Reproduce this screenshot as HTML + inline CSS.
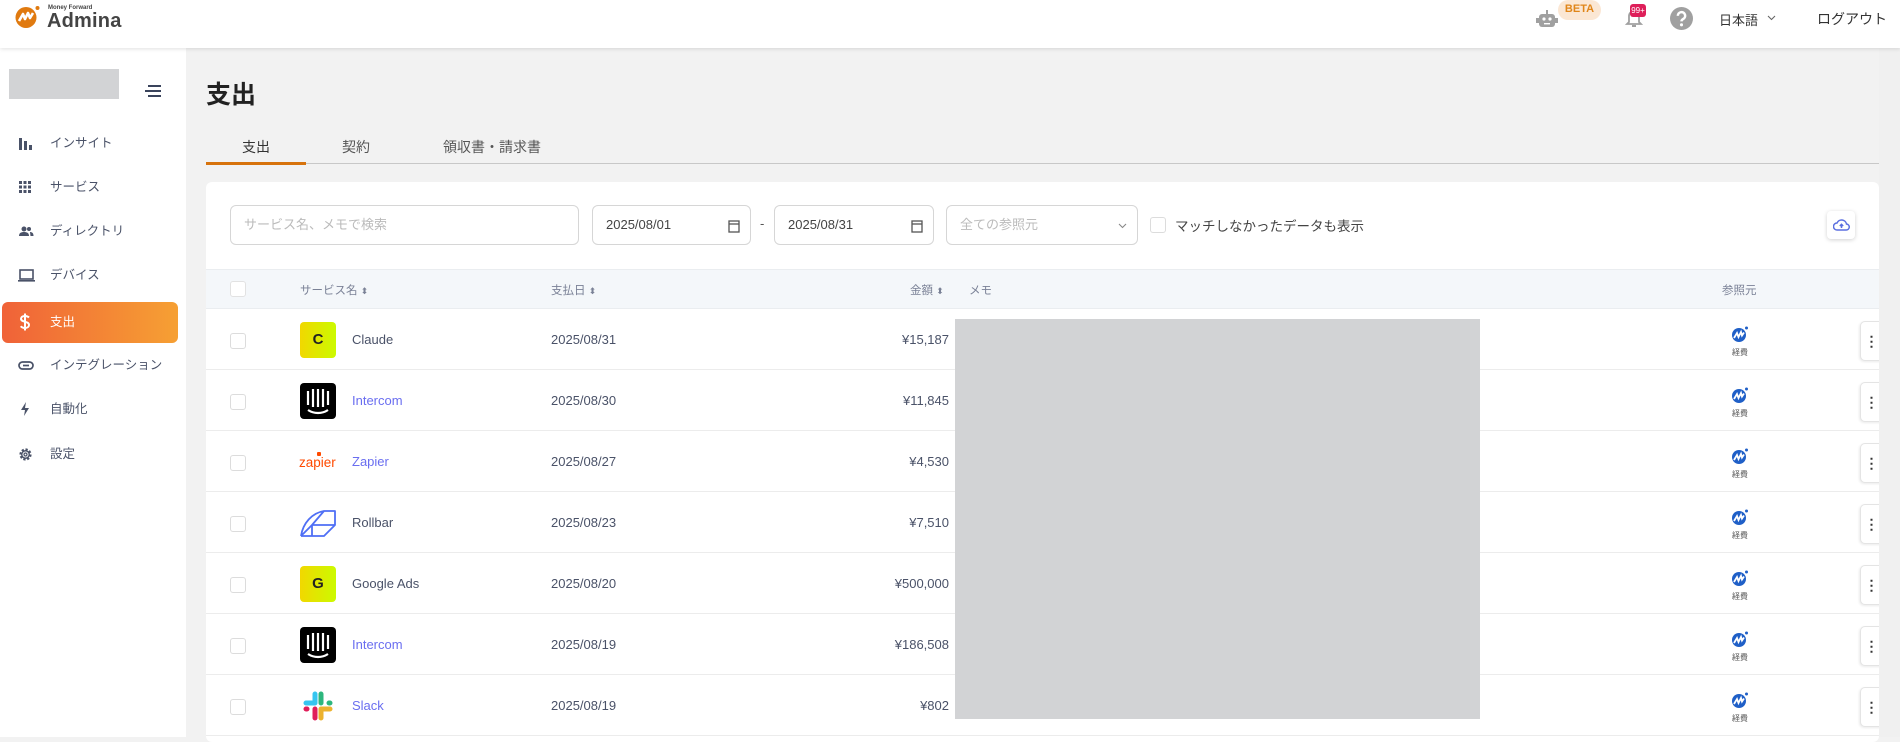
<!DOCTYPE html>
<html><head><meta charset="utf-8"><style>
*{box-sizing:border-box;margin:0;padding:0}
body{width:1900px;height:737px;overflow:hidden;background:#f2f2f2;font-family:"Liberation Sans","Noto Sans CJK JP",sans-serif;color:#444;position:relative}
.abs{position:absolute}
#hdr{left:0;top:0;width:1900px;height:48px;background:#fff;box-shadow:0 1px 4px rgba(0,0,0,.12);z-index:3}
#side{left:0;top:48px;width:186px;height:689px;background:#fff}
.nav{position:absolute;left:2px;width:176px;height:41px;border-radius:6px;font-size:12.5px;color:#4a5268;line-height:41px;padding-left:48px}
.nav svg{position:absolute;left:16px;top:13px}
.nav.act{background:linear-gradient(90deg,#f06238,#f6a033);color:#fff}
#card{left:206px;top:182px;width:1673px;height:560px;background:#fff;border-radius:6px}
.inp{position:absolute;top:205px;height:40px;border:1px solid #d6d6d6;border-radius:6px;font-size:13px;line-height:38px;padding-left:13px;background:#fff}
.row{position:absolute;left:206px;width:1673px;height:61px;border-bottom:1px solid #ececec}
.cb{position:absolute;width:16px;height:16px;border:1px solid #dcdcdc;border-radius:3px;background:#fff}
.t{position:absolute;font-size:13px;white-space:nowrap}
.th{position:absolute;font-size:11.5px;color:#7a8196;white-space:nowrap}
.kb{position:absolute;left:1860px;width:22px;height:40px;background:#fff;border:1px solid #e4e4e4;border-right:none;border-radius:5px 0 0 5px;box-shadow:-1px 1px 2px rgba(0,0,0,.08);font-weight:bold;font-size:14px;text-align:center;line-height:38px;color:#333}
.mf{position:absolute;left:1728px;width:24px;text-align:center}
.mf div{font-size:8px;color:#555;line-height:10px;margin-top:1px}
</style></head><body>
<div id="hdr" class="abs">
  <svg class="abs" style="left:15px;top:5px" width="26" height="24" viewBox="0 0 26 24"><circle cx="11" cy="12.5" r="10.5" fill="#e07a10"/><circle cx="22.5" cy="3" r="2" fill="#e07a10"/><path d="M4 16 L8 9 L10 14 L13 8 L15 13 L18 8" stroke="#fff" stroke-width="2.6" fill="none" stroke-linejoin="round"/></svg>
  <div class="abs" style="left:48px;top:5px;font-size:6px;font-weight:bold;color:#444">Money Forward</div>
  <div class="abs" style="left:47px;top:10px;font-size:20px;font-weight:bold;color:#444;letter-spacing:0.2px">Admina</div>
  <svg class="abs" style="left:1536px;top:9px" width="22" height="20" viewBox="0 0 22 20"><rect x="3" y="5" width="16" height="13" rx="3" fill="#a0a0a0"/><rect x="0" y="9" width="3" height="5" fill="#a0a0a0"/><rect x="19" y="9" width="3" height="5" fill="#a0a0a0"/><rect x="10" y="1" width="2" height="4" fill="#a0a0a0"/><circle cx="8" cy="10" r="1.6" fill="#fff"/><circle cx="14" cy="10" r="1.6" fill="#fff"/><rect x="8" y="14" width="6" height="1.4" fill="#fff"/></svg>
  <div class="abs" style="left:1558px;top:0;width:43px;height:20px;border-radius:10px;background:#fbe7d4;color:#e0861a;font-size:11px;font-weight:bold;text-align:center;line-height:19px">BETA</div>
  <svg class="abs" style="left:1625px;top:6px" width="18" height="22" viewBox="0 0 18 22"><path d="M4 16V10a5 5 0 0 1 10 0v6l2 2H2z" fill="none" stroke="#a0a0a0" stroke-width="1.8"/><rect x="7" y="19" width="4" height="2" fill="#a0a0a0"/></svg>
  <div class="abs" style="left:1630px;top:4px;width:16px;height:13px;border-radius:3px;background:#de1f5a;color:#fff;font-size:8px;text-align:center;line-height:13px">99+</div>
  <svg class="abs" style="left:1670px;top:7px" width="23" height="23" viewBox="0 0 24 24"><circle cx="12" cy="12" r="12" fill="#a0a0a0"/><path d="M8.2 9.2a3.8 3.8 0 1 1 5.6 3.3c-1.2.7-1.8 1.2-1.8 2.5" stroke="#fff" stroke-width="2.6" fill="none"/><circle cx="12" cy="18.6" r="1.6" fill="#fff"/></svg>
  <div class="abs" style="left:1719px;top:10px;font-size:13px;color:#333">日本語</div>
  <svg class="abs" style="left:1767px;top:15px" width="9" height="6" viewBox="0 0 9 6"><path d="M1 1l3.5 3.5L8 1" stroke="#666" fill="none" stroke-width="1.1"/></svg>
  <div class="abs" style="left:1817px;top:9px;font-size:14px;color:#333">ログアウト</div>
</div>

<div id="side" class="abs"></div>
<div class="abs" style="left:9px;top:69px;width:110px;height:30px;background:#d2d3d5"></div>
<svg class="abs" style="left:144px;top:84px" width="18" height="14" viewBox="0 0 18 14"><path d="M4 2h13M1 7h16M4 12h13" stroke="#1e2a45" stroke-width="1.8"/></svg>
<div class="nav" style="top:123px"><svg width="16" height="14" viewBox="0 0 16 14"><rect x="1" y="2" width="3" height="12" fill="#4a5268"/><rect x="6" y="5" width="3" height="9" fill="#4a5268"/><rect x="11" y="9" width="3" height="5" fill="#4a5268"/></svg>インサイト</div>
<div class="nav" style="top:167px"><svg width="14" height="14" viewBox="0 0 14 14" fill="#4a5268"><rect x="1" y="1" width="3" height="3"/><rect x="5.5" y="1" width="3" height="3"/><rect x="10" y="1" width="3" height="3"/><rect x="1" y="5.5" width="3" height="3"/><rect x="5.5" y="5.5" width="3" height="3"/><rect x="10" y="5.5" width="3" height="3"/><rect x="1" y="10" width="3" height="3"/><rect x="5.5" y="10" width="3" height="3"/><rect x="10" y="10" width="3" height="3"/></svg>サービス</div>
<div class="nav" style="top:211px"><svg width="16" height="14" viewBox="0 0 16 14" fill="#4a5268"><circle cx="6" cy="5" r="2.5"/><circle cx="11" cy="5" r="2"/><path d="M1 12c0-3 2-4 5-4s5 1 5 4z"/><path d="M12 8c2 0 3.5 1 3.5 4h-3z"/></svg>ディレクトリ</div>
<div class="nav" style="top:255px"><svg width="17" height="14" viewBox="0 0 17 14"><rect x="2" y="2" width="13" height="9" fill="none" stroke="#4a5268" stroke-width="1.6"/><rect x="0" y="12" width="17" height="1.6" fill="#4a5268"/></svg>デバイス</div>
<div class="nav act" style="top:302px"><svg width="14" height="18" viewBox="0 0 14 18" style="top:11px"><path d="M11 4.5C10 3.5 9 3 7 3 4.5 3 3 4.2 3 5.8c0 3.8 8 2 8 6.2 0 1.7-1.6 3-4 3-2 0-3.4-.7-4.2-1.8M7 0.5v17" stroke="#fff" stroke-width="2" fill="none"/></svg>支出</div>
<div class="nav" style="top:345px"><svg width="16" height="14" viewBox="0 0 16 14"><rect x="1" y="4" width="14" height="7" rx="3.5" fill="none" stroke="#4a5268" stroke-width="1.7"/><path d="M5 7.5h6" stroke="#4a5268" stroke-width="1.7"/></svg>インテグレーション</div>
<div class="nav" style="top:389px"><svg width="14" height="14" viewBox="0 0 14 14"><path d="M8 0L3 8h4l-1 6 5-8H7z" fill="#4a5268"/></svg>自動化</div>
<div class="nav" style="top:434px"><svg width="15" height="15" viewBox="0 0 16 16"><circle cx="8" cy="8" r="5" fill="none" stroke="#4a5268" stroke-width="3" stroke-dasharray="2.2 1.7"/><circle cx="8" cy="8" r="4" fill="none" stroke="#4a5268" stroke-width="1.5"/><circle cx="8" cy="8" r="1.6" fill="none" stroke="#4a5268" stroke-width="1.3"/></svg>設定</div>

<div class="abs" style="left:206px;top:75px;font-size:25px;font-weight:bold;color:#222">支出</div>
<div class="abs" style="left:206px;top:163px;width:1673px;height:1px;background:#c8c8c8"></div>
<div class="abs" style="left:206px;top:162px;width:100px;height:3px;background:#d7730d"></div>
<div class="t" style="left:242px;top:137px;font-size:14px;color:#333">支出</div>
<div class="t" style="left:342px;top:137px;font-size:14px;color:#555">契約</div>
<div class="t" style="left:443px;top:137px;font-size:14px;color:#555">領収書・請求書</div>

<div id="card" class="abs"></div>
<div class="inp" style="left:230px;width:349px;color:#bbb">サービス名、メモで検索</div>
<div class="inp" style="left:592px;width:159px;color:#444">2025/08/01<svg class="abs" style="right:10px;top:13px" width="12" height="14" viewBox="0 0 12 14"><rect x="1" y="2" width="10" height="11" fill="none" stroke="#555" stroke-width="1.3"/><path d="M1 5h10" stroke="#555" stroke-width="1.3"/></svg></div>
<div class="t" style="left:760px;top:216px;color:#555">-</div>
<div class="inp" style="left:774px;width:160px;color:#444">2025/08/31<svg class="abs" style="right:10px;top:13px" width="12" height="14" viewBox="0 0 12 14"><rect x="1" y="2" width="10" height="11" fill="none" stroke="#555" stroke-width="1.3"/><path d="M1 5h10" stroke="#555" stroke-width="1.3"/></svg></div>
<div class="inp" style="left:946px;width:192px;color:#bbb">全ての参照元<svg class="abs" style="right:10px;top:17px" width="9" height="6" viewBox="0 0 9 6"><path d="M1 1l3.5 3.5L8 1" stroke="#888" fill="none" stroke-width="1.1"/></svg></div>
<div class="cb" style="left:1150px;top:217px"></div>
<div class="t" style="left:1175px;top:215px;color:#444;font-size:13.5px">マッチしなかったデータも表示</div>
<div class="abs" style="left:1827px;top:211px;width:28px;height:28px;background:#fff;border-radius:4px;box-shadow:0 1px 4px rgba(0,0,0,.18)"><svg class="abs" style="left:6px;top:8px" width="17" height="12" viewBox="0 0 17 12"><path d="M4 11a3.5 3.5 0 0 1 0-7 5 5 0 0 1 9.5 1A3 3 0 0 1 13 11z" fill="none" stroke="#5b6fe0" stroke-width="1.5"/><path d="M8.5 9V5.5M6.8 7l1.7-1.7L10.2 7" stroke="#5b6fe0" stroke-width="1.5" fill="none"/></svg></div>

<div class="abs" style="left:206px;top:269px;width:1673px;height:40px;background:#f4f7fa;border-top:1px solid #eaedf0;border-bottom:1px solid #eaedf0"></div>
<div class="cb" style="left:230px;top:281px;border-color:#e2e2e2"></div>
<div class="th" style="left:300px;top:282px">サービス名 <span style="font-size:9px">⬍</span></div>
<div class="th" style="left:551px;top:282px">支払日 <span style="font-size:9px">⬍</span></div>
<div class="th" style="left:910px;top:282px">金額 <span style="font-size:9px">⬍</span></div>
<div class="th" style="left:969px;top:282px">メモ</div>
<div class="th" style="left:1722px;top:282px">参照元</div>

<div class="row" style="top:309px"></div>
<div class="row" style="top:370px"></div>
<div class="row" style="top:431px"></div>
<div class="row" style="top:492px"></div>
<div class="row" style="top:553px"></div>
<div class="row" style="top:614px"></div>
<div class="row" style="top:675px"></div>

<div class="abs" style="left:955px;top:319px;width:525px;height:400px;background:#d2d3d5"></div>

<div class="cb" style="left:230px;top:333px"></div><div class="cb" style="left:230px;top:394px"></div><div class="cb" style="left:230px;top:455px"></div><div class="cb" style="left:230px;top:516px"></div><div class="cb" style="left:230px;top:577px"></div><div class="cb" style="left:230px;top:638px"></div><div class="cb" style="left:230px;top:699px"></div>

<div class="abs" style="left:300px;top:322px;width:36px;height:36px;border-radius:4px;background:linear-gradient(90deg,#f1d800,#ccfa00);font-weight:bold;font-size:15px;text-align:center;line-height:36px;color:#222">C</div>
<div class="t" style="left:352px;top:332px;color:#4a5268">Claude</div>
<svg class="abs" style="left:300px;top:383px" width="36" height="36" viewBox="0 0 36 36"><rect width="36" height="36" rx="4" fill="#000"/><path d="M8 8v14M13 6v18M18 6v18M23 6v18M28 8v14" stroke="#fff" stroke-width="2.2"/><path d="M8 27c6 4 14 4 20 0" stroke="#fff" stroke-width="2.2" fill="none"/></svg>
<div class="t" style="left:352px;top:393px;color:#6a6ef0">Intercom</div>
<div class="t" style="left:299px;top:455px;color:#ff4a00;font-size:13.5px">zapier</div><div class="abs" style="left:317px;top:452px;width:4px;height:4px;background:#ff4a00;border-radius:1px"></div>
<div class="t" style="left:352px;top:454px;color:#6a6ef0">Zapier</div>
<svg class="abs" style="left:300px;top:507px" width="38" height="32" viewBox="0 0 38 32"><path d="M1 29 L12 18 L35 18 L35 4 L24 4 L12 18 L12 29 M1 29 L24 29 L35 18 M1 29 C3 16 12 6 24 4" fill="none" stroke="#4f6ff5" stroke-width="1.8" stroke-linejoin="round"/></svg>
<div class="t" style="left:352px;top:515px;color:#4a5268">Rollbar</div>
<div class="abs" style="left:300px;top:566px;width:36px;height:36px;border-radius:4px;background:linear-gradient(90deg,#f1d800,#ccfa00);font-weight:bold;font-size:15px;text-align:center;line-height:36px;color:#222">G</div>
<div class="t" style="left:352px;top:576px;color:#4a5268">Google Ads</div>
<svg class="abs" style="left:300px;top:627px" width="36" height="36" viewBox="0 0 36 36"><rect width="36" height="36" rx="4" fill="#000"/><path d="M8 8v14M13 6v18M18 6v18M23 6v18M28 8v14" stroke="#fff" stroke-width="2.2"/><path d="M8 27c6 4 14 4 20 0" stroke="#fff" stroke-width="2.2" fill="none"/></svg>
<div class="t" style="left:352px;top:637px;color:#6a6ef0">Intercom</div>
<svg class="abs" style="left:302px;top:690px" width="32" height="32" viewBox="0 0 32 32" stroke-linecap="round" stroke-width="5"><path d="M13 4v9M4 13h9" stroke="#36c5f0"/><path d="M19 4v9M28 13h-1" stroke="#2eb67d"/><path d="M19 28v-9M28 19h-9" stroke="#ecb22e"/><path d="M13 28v-9M4 19h1" stroke="#e01e5a"/></svg>
<div class="t" style="left:352px;top:698px;color:#6a6ef0">Slack</div>

<div class="t" style="left:551px;top:332px;color:#4a5268">2025/08/31</div>
<div class="t" style="left:551px;top:393px;color:#4a5268">2025/08/30</div>
<div class="t" style="left:551px;top:454px;color:#4a5268">2025/08/27</div>
<div class="t" style="left:551px;top:515px;color:#4a5268">2025/08/23</div>
<div class="t" style="left:551px;top:576px;color:#4a5268">2025/08/20</div>
<div class="t" style="left:551px;top:637px;color:#4a5268">2025/08/19</div>
<div class="t" style="left:551px;top:698px;color:#4a5268">2025/08/19</div>

<div class="t" style="right:951px;top:332px;color:#4a5268">¥15,187</div>
<div class="t" style="right:951px;top:393px;color:#4a5268">¥11,845</div>
<div class="t" style="right:951px;top:454px;color:#4a5268">¥4,530</div>
<div class="t" style="right:951px;top:515px;color:#4a5268">¥7,510</div>
<div class="t" style="right:951px;top:576px;color:#4a5268">¥500,000</div>
<div class="t" style="right:951px;top:637px;color:#4a5268">¥186,508</div>
<div class="t" style="right:951px;top:698px;color:#4a5268">¥802</div>

<div class="mf" style="top:326px"><svg width="18" height="16" viewBox="0 0 18 16"><circle cx="8" cy="9" r="7" fill="#1f5fc7"/><circle cx="15.5" cy="2" r="1.5" fill="#1f5fc7"/><path d="M3 12l3-5 1.5 4 2.5-5 1 3.5 2-3" stroke="#fff" stroke-width="1.8" fill="none"/></svg><div>経費</div></div>
<div class="mf" style="top:387px"><svg width="18" height="16" viewBox="0 0 18 16"><circle cx="8" cy="9" r="7" fill="#1f5fc7"/><circle cx="15.5" cy="2" r="1.5" fill="#1f5fc7"/><path d="M3 12l3-5 1.5 4 2.5-5 1 3.5 2-3" stroke="#fff" stroke-width="1.8" fill="none"/></svg><div>経費</div></div>
<div class="mf" style="top:448px"><svg width="18" height="16" viewBox="0 0 18 16"><circle cx="8" cy="9" r="7" fill="#1f5fc7"/><circle cx="15.5" cy="2" r="1.5" fill="#1f5fc7"/><path d="M3 12l3-5 1.5 4 2.5-5 1 3.5 2-3" stroke="#fff" stroke-width="1.8" fill="none"/></svg><div>経費</div></div>
<div class="mf" style="top:509px"><svg width="18" height="16" viewBox="0 0 18 16"><circle cx="8" cy="9" r="7" fill="#1f5fc7"/><circle cx="15.5" cy="2" r="1.5" fill="#1f5fc7"/><path d="M3 12l3-5 1.5 4 2.5-5 1 3.5 2-3" stroke="#fff" stroke-width="1.8" fill="none"/></svg><div>経費</div></div>
<div class="mf" style="top:570px"><svg width="18" height="16" viewBox="0 0 18 16"><circle cx="8" cy="9" r="7" fill="#1f5fc7"/><circle cx="15.5" cy="2" r="1.5" fill="#1f5fc7"/><path d="M3 12l3-5 1.5 4 2.5-5 1 3.5 2-3" stroke="#fff" stroke-width="1.8" fill="none"/></svg><div>経費</div></div>
<div class="mf" style="top:631px"><svg width="18" height="16" viewBox="0 0 18 16"><circle cx="8" cy="9" r="7" fill="#1f5fc7"/><circle cx="15.5" cy="2" r="1.5" fill="#1f5fc7"/><path d="M3 12l3-5 1.5 4 2.5-5 1 3.5 2-3" stroke="#fff" stroke-width="1.8" fill="none"/></svg><div>経費</div></div>
<div class="mf" style="top:692px"><svg width="18" height="16" viewBox="0 0 18 16"><circle cx="8" cy="9" r="7" fill="#1f5fc7"/><circle cx="15.5" cy="2" r="1.5" fill="#1f5fc7"/><path d="M3 12l3-5 1.5 4 2.5-5 1 3.5 2-3" stroke="#fff" stroke-width="1.8" fill="none"/></svg><div>経費</div></div>

<div class="kb" style="top:321px">⋮</div>
<div class="kb" style="top:382px">⋮</div>
<div class="kb" style="top:443px">⋮</div>
<div class="kb" style="top:504px">⋮</div>
<div class="kb" style="top:565px">⋮</div>
<div class="kb" style="top:626px">⋮</div>
<div class="kb" style="top:687px">⋮</div>
<div class="abs" style="left:1879px;top:48px;width:21px;height:689px;background:#f0f0f0"></div>
</body></html>
